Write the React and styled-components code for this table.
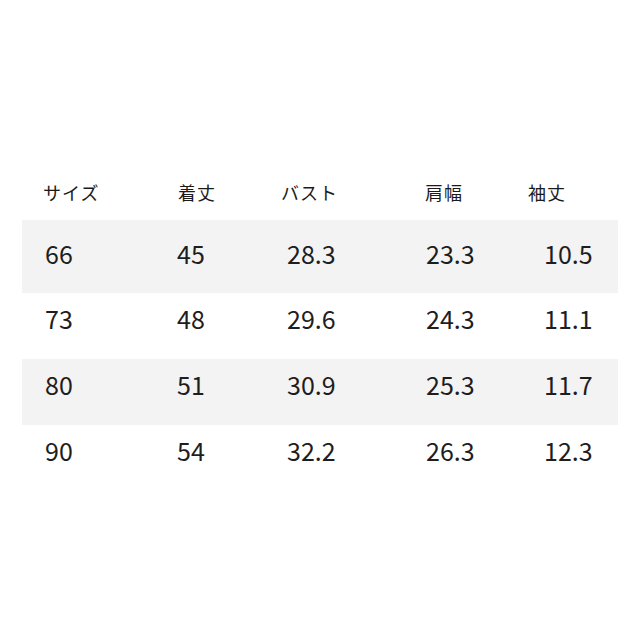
import styled, { createGlobalStyle } from "styled-components";

const GlobalStyle = createGlobalStyle`
  html, body {
    margin: 0;
    padding: 0;
    background: #fff;
  }
`;

const headers = [
  { label: "サイズ", shift: -2 },
  { label: "着丈", shift: 1 },
  { label: "バスト", shift: -6 },
  { label: "肩幅", shift: -1 },
  { label: "袖丈", shift: -16 },
];

const rows = [
  ["66", "45", "28.3", "23.3", "10.5"],
  ["73", "48", "29.6", "24.3", "11.1"],
  ["80", "51", "30.9", "25.3", "11.7"],
  ["90", "54", "32.2", "26.3", "12.3"],
];

function App() {
  return (
    <Page>
      <GlobalStyle />
      <Table>
        <HeadRow>
          {headers.map((h) => (
            <HeadCell key={h.label} $shift={h.shift}>
              {h.label}
            </HeadCell>
          ))}
        </HeadRow>
        {rows.map((r, i) => (
          <Row key={r[0]} $shaded={i % 2 === 0} $first={i === 0}>
            {r.map((v, j) => (
              <Cell key={j}>{v}</Cell>
            ))}
          </Row>
        ))}
      </Table>
    </Page>
  );
}

export default App;

const Page = styled.div`
  width: 640px;
  height: 640px;
  padding-top: 168px;
  box-sizing: border-box;
  background: #fff;
`;

const Table = styled.div`
  margin-left: 22px;
  width: 596px;
  display: flex;
  flex-direction: column;
`;

const RowBase = styled.div`
  display: grid;
  grid-template-columns: 132px 110px 139px 118px 1fr;
  padding-left: 23px;
  align-items: center;
  box-sizing: border-box;
`;

const HeadRow = styled(RowBase)`
  height: 52px;
  padding-bottom: 4px;
`;

const HeadCell = styled.div`
  margin-left: ${(p) => p.$shift}px;
  font-family: "Noto Sans CJK JP", "Noto Sans", sans-serif;
  font-size: 18px;
  font-weight: 400;
  letter-spacing: 1px;
  line-height: 1;
  color: #1a1a1a;
`;

const Row = styled(RowBase)`
  height: ${(p) => (p.$first ? 73 : 66)}px;
  padding-bottom: ${(p) => (p.$first ? 7 : 15)}px;
  background: ${(p) => (p.$shaded ? "#f3f3f3" : "#fff")};
`;

const Cell = styled.div`
  font-family: "Noto Sans CJK JP", "Noto Sans", sans-serif;
  font-size: 25px;
  line-height: 1;
  color: #1e1e1e;
`;
